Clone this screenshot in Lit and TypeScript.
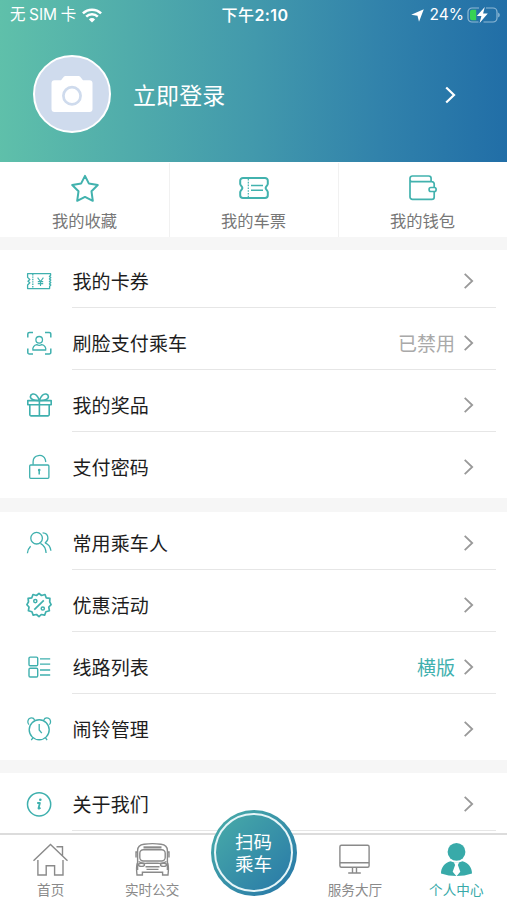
import { LitElement, html, css, svg, nothing } from "lit";
import { customElement, property } from "lit/decorators.js";

const ICONS: Record<string, unknown> = {
  coupon: svg`<path d="M2.6 6.7H25.6V8.3l-1.2 1.1 1.4 1.2-1.4 1.3 1.4 1.2-1.4 1.3 1.4 1.2-1.4 1.3 1.4 1.2-1.2 1.2V21.6H2.6V18l2.2-2.2-1.8-1.6 1.8-1.7L2.6 10.4Z"/><path d="M7.8 7v14.5" stroke-dasharray="1.4 1"/><path d="M12.6 10.7l2.9 3.8 2.9-3.8M15.5 14.5v4.4M12.8 14.6h5.4M12.8 16.6h5.4" stroke-width="1.1"/>`,
  face: svg`<path d="M2.8 8.4V5a1.6 1.6 0 0 1 1.6-1.6H8M20 3.4h4.2A1.6 1.6 0 0 1 25.8 5v3.4M25.8 19.6V23.4a1.6 1.6 0 0 1-1.6 1.6H20M8 25H4.4a1.6 1.6 0 0 1-1.6-1.6V19.6" stroke-width="1.5"/><circle cx="14.2" cy="10.8" r="3.3"/><path d="M7.900 21c-.6-2.600 1.200-4.900 3.900-5.300 1.600.8 3.400.8 5 0 2.700.4 4.500 2.700 3.900 5.300Z"/>`,
  gift: svg`<g stroke-width="1.6"><path d="M2.8 9.600H26.200v4.200H2.800ZM4.800 13.800H24.200V23.600a1.300 1.300 0 0 1-1.300 1.300H6.100a1.300 1.300 0 0 1-1.300-1.300ZM14.400 9.600V25"/><path d="M14.400 9.400C10 9.800 5.200 8.600 5.400 5.600c.2-2.800 3.900-3.600 6-1.300 1.200 1.300 2.300 3 3 5.100ZM14.400 9.400C18.800 9.800 23.600 8.600 23.400 5.600c-.2-2.800-3.900-3.600-6-1.300-1.200 1.300-2.300 3-3 5.100Z"/></g>`,
  lock: svg`<rect x="4.700" y="12" width="19.200" height="13.300" rx="1"/><path d="M8.100 11.800V8.600a6.300 6.300 0 0 1 12.200-2l.5 2.400"/><circle cx="14.200" cy="17" r="1.300" fill="currentColor" stroke="none"/><path d="M14.200 17v4.500" stroke-width="1.500"/>`,
  people: svg`<circle cx="11.600" cy="9.200" r="5.800"/><path d="M2.400 24.300c.2-2.900 1.300-5.100 3.200-7M15.400 14.300c3.400 1.700 5.400 5.300 5.700 9.700M17.600 3.800c3.200.1 5.300 2.300 5.300 5.300 0 2-.9 3.700-2.700 4.700 3.400 1.400 5.300 4.100 5.700 8"/>`,
  offer: svg`<path stroke-width="1.700" d="M14 2.300l2.500 2.200 3.500-1 1.200 3.300 3.700.5-.2 3.600 1.400 2.800-2.300 2.300.6 3.800-3.500.9-1.300 3.500-3.300-.7L14 25.700l-2.500-2.200-3.300.7-1.300-3.500-3.500-.9.600-3.800-2.100-2.300 1.600-2.800-.4-3.600 3.700-.5L8 3.500l3.500 1Z"/><path stroke-width="1.700" d="M9.300 18.700 18.800 9.300"/><circle cx="10.300" cy="10.100" r="1.600" stroke-width="1.500"/><circle cx="17.800" cy="17.500" r="1.600" stroke-width="1.500"/>`,
  list: svg`<rect x="4" y="4.100" width="8.700" height="8.700" rx="1.200" stroke-width="1.400"/><rect x="4" y="15.300" width="8.700" height="8.700" rx="1.200" stroke-width="1.400"/><path d="M15 5.800h10.200M15 11.200h10.200M15 17h10.200M15 22h10.200"/>`,
  alarm: svg`<circle cx="14.200" cy="14.800" r="10" stroke-width="1.400"/><path d="M4 9.600C2.100 7.800 2.500 4 5.200 3.200c2-.6 3.700.2 4.400 1.700M24.400 9.600c1.900-1.800 1.500-5.600-1.200-6.400-2-.6-3.700.2-4.400 1.700M14.200 9v6l2.600 3.200M8 22.600l-1.700 2.600M20.400 22.600l1.700 2.600"/>`,
  info: svg`<circle cx="14.100" cy="14.300" r="11.600" stroke-width="1.500"/><path d="M12.200 13h2.700l-1.400 5.200c0 .8.900.6 2-.5" stroke-width="1.800"/><circle cx="15.300" cy="9.800" r="1.300" fill="currentColor" stroke="none"/>`,
  star: svg`<path stroke-width="2" d="M14 1.900l3.800 7.500 9 1.600-6.300 6.300 1.300 9.500L14 22.900l-7.800 3.900 1.300-9.500L1.200 11l9-1.600Z"/>`,
  ticket: svg`<path stroke-width="2" d="M3 4H25a2.800 2.800 0 0 1 2.800 2.800V10c0 1.200-2.200 2.600-2.200 4s2.200 2.800 2.200 4v3.200A2.800 2.800 0 0 1 25 24H3a2.800 2.800 0 0 1-2.800-2.800V18c0-1.200 2.200-2.600 2.200-4S.2 11.200.2 10V6.800A2.800 2.800 0 0 1 3 4Z"/><path d="M8.300 5v18" stroke-dasharray="1.600 1.200"/><path d="M11 11.500h12M11 16.300h12" stroke-width="1.500"/>`,
  wallet: svg`<g stroke-width="1.700"><path d="M1 8V4.400A2.400 2.400 0 0 1 3.400 2H19.700a2.400 2.400 0 0 1 2.400 2.400V7.400M1 5.800a2 2 0 0 0 2 1.800H22.800a2.400 2.400 0 0 1 2.400 2.400V13M25.200 18v4.900a2.400 2.400 0 0 1-2.400 2.400H3.400A2.400 2.400 0 0 1 1 22.900V5"/><rect x="20.100" y="13.500" width="7" height="4" rx="1.700"/></g>`,
};

@customElement("menu-row")
export class MenuRow extends LitElement {
  @property() icon = "";
  @property() label = "";
  @property() value = "";
  @property({ type: Boolean }) accent = false;
  @property({ type: Boolean }) last = false;
  static styles = css`
    :host { display: block; height: 62px; }
    .line { display: flex; align-items: center; height: 52px; padding: 5px 33px 0 24.5px; }
    .icon { width: 28px; height: 28px; color: #3fb0ae; flex: none; fill: none; stroke: currentColor; stroke-width: 1.3; stroke-linejoin: round; stroke-linecap: butt; }
    .label { margin-left: 20px; flex: 1; font-size: 19px; line-height: 28px; letter-spacing: .1px; color: #1d1d1d; }
    .value { font-size: 19px; line-height: 28px; color: #a9a9a9; margin-right: 9px; }
    .accent { color: #3fb0ae; }
    .chev { width: 10px; height: 16px; fill: none; stroke: #999; stroke-width: 1.8; }
    .rule { height: 1px; margin: 0 11px 0 72px; background: #e6e6e6; }
  `;
  render() {
    return html`<div class="line">
        <svg class="icon" viewBox="0 0 28 28">${ICONS[this.icon]}</svg>
        <span class="label">${this.label}</span>
        ${this.value ? html`<span class="value ${this.accent ? "accent" : ""}">${this.value}</span>` : nothing}
        <svg class="chev" viewBox="0 0 10 16"><path d="M.7.8 8.200 8 .7 15.200"/></svg>
      </div>
      ${this.last ? nothing : html`<div class="rule"></div>`}`;
  }
}

interface Item { icon: string; label: string; value?: string; accent?: boolean }

const GROUPS: Item[][] = [
  [
    { icon: "coupon", label: "我的卡券" },
    { icon: "face", label: "刷脸支付乘车", value: "已禁用" },
    { icon: "gift", label: "我的奖品" },
    { icon: "lock", label: "支付密码" },
  ],
  [
    { icon: "people", label: "常用乘车人" },
    { icon: "offer", label: "优惠活动" },
    { icon: "list", label: "线路列表", value: "横版", accent: true },
    { icon: "alarm", label: "闹铃管理" },
  ],
  [{ icon: "info", label: "关于我们" }],
];

const NAV = {
  home: svg`<path d="M1.500 18.800 18.500 2.500 35.500 18.800M24.500 4.800H30.500V13.400M5.900 18v15H14.200V23.800h8.400V33H31V18"/>`,
  bus: svg`<path d="M3.600 28V8.500C3.600 4 6 2.700 10 2.200c5.500-.8 11.500-.8 17 0 4 .5 6.400 1.800 6.400 6.300V28M3.300 21c-1.200 4-.8 8-.3 12h5.400V30.200h20.200V33h5.400c.5-4 .9-8-.3-12M3.500 10H2v5.500M33.500 10H35v5.500" /><rect x="5.800" y="7.800" width="25.400" height="11.200" rx="3.500"/><path d="M9.500 5.400h18" stroke-width="2.200"/><path d="M4.500 19.500c3 2.300 6 2 9 1.800h10c3 .2 6 .5 9-1.800M11.500 24.800h14M12.500 27.400h12" /><ellipse cx="7.500" cy="22.800" rx="3" ry="1.600"/><ellipse cx="29.500" cy="22.800" rx="3" ry="1.600"/>`,
  desk: svg`<rect x="3.900" y="3.200" width="29.200" height="22" rx="1.500"/><path d="M3.900 20.800h29.200M16.500 25.500v5M20.500 25.500v5M12.200 31h12.600"/>`,
  me: svg`<circle cx="18.500" cy="9.900" r="8.900" fill="currentColor" stroke="none"/><path d="M12.500 19.200Q18.500 22 24.500 19.200C30.500 21 34 25.500 34 31.500Q26.500 34 18.500 34T3 31.500C3 25.500 6.500 21 12.500 19.200Z" fill="currentColor" stroke="none"/><path d="M15.800 20.300h5.400L19.900 23l2.400 6.800-3.800 4.400-3.800-4.400L17.100 23Z" fill="#fff" stroke="none"/>`,
};

@customElement("app-root")
export class AppRoot extends LitElement {
  static styles = css`
    :host { display: flex; flex-direction: column; position: relative; width: 507px; height: 900px; overflow: hidden; background: #f6f6f6; font-family: "Noto Sans CJK SC", sans-serif; }
    .header { flex: none; height: 162px; background: linear-gradient(91deg, #5fc0aa 0%, #4299ac 50%, #3182ab 75%, #216ea7 100%); color: #fff; }
    .status { display: grid; grid-template-columns: 1fr auto 1fr; align-items: center; height: 30px; padding: 0 7px 0 10px; font-family: Inter, "Noto Sans CJK SC", sans-serif; font-size: 15.5px; line-height: 24px; }
    .left, .right { display: flex; align-items: center; }
    .right { justify-content: flex-end; }
    .time { font-weight: 600; font-size: 16px; letter-spacing: .4px; }
    .time span { font-weight: 500; }
    .carrier { display: flex; gap: 3.500px; }
    .wifi { width: 20px; height: 15px; margin-left: 6px; }
    .loc { width: 13px; height: 13px; margin-right: 6px; }
    .pct { margin-right: 3px; font-size: 15.500px; }
    .batt { width: 33px; height: 18px; }
    .profile { display: flex; align-items: center; height: 128px; padding: 0 51px 0 33px; }
    .avatar { box-sizing: border-box; width: 78px; height: 78px; border: 2.500px solid #fff; border-radius: 50%; background: #cfdbed; display: grid; place-items: center; }
    .avatar svg { width: 42px; height: 38px; }
    .login { flex: 1; margin-left: 22px; font-size: 23px; line-height: 34px; letter-spacing: .1px; }
    .go { width: 11px; height: 18px; margin-top: 2px; fill: none; stroke: #fff; stroke-width: 2.200; }
    .quick { flex: none; display: grid; grid-template-columns: repeat(3, 1fr); height: 74px; background: #fff; padding-top: 1px; }
    .tile { display: flex; flex-direction: column; align-items: center; padding-top: 11px; box-sizing: border-box; box-shadow: 1px 0 #f1f1f1; color: #777; font-size: 16.300px; line-height: 24px; }
    .tile:last-child { box-shadow: none; }
    .tile svg { width: 28px; height: 28px; margin-bottom: 6px; overflow: visible; fill: none; stroke: #42b2ae; stroke-width: 1.200; stroke-linejoin: round; }
    .group { flex: none; background: #fff; margin-top: 13px; }
    .group:nth-of-type(4) { margin-top: 14px; }
    .nav { position: absolute; left: 0; right: 0; bottom: 0; height: 65px; border-top: 2px solid #dcdcdc; background: #fff; display: grid; grid-template-columns: repeat(5, 1fr); }
    .tab { display: flex; flex-direction: column; align-items: center; color: #8a8a8a; font-size: 13.600px; line-height: 20px; padding-top: 7px; }
    .tab svg { width: 37px; height: 35px; margin-bottom: 2px; fill: none; stroke: currentColor; stroke-width: 1.400; }
    .on { color: #38aaa9; }
    .scan { position: absolute; left: 210.500px; top: 809.500px; width: 86px; height: 86px; border-radius: 50%; padding: 3.500px; box-sizing: border-box; background: linear-gradient(135deg, #4aaea8, #2675a8); }
    .ring { box-sizing: border-box; width: 100%; height: 100%; border: 2px solid #e6f5f8; border-radius: 50%; display: grid; place-content: center; color: #fff; font-size: 18.500px; line-height: 22px; text-align: center; }
    .ring span { width: 38px; margin-top: -1px; }
  `;
  tile(icon: string, label: string) {
    return html`<div class="tile"><svg viewBox="0 0 28 28">${ICONS[icon]}</svg><span>${label}</span></div>`;
  }
  tab(icon: keyof typeof NAV, label: string, on = false) {
    return html`<div class="tab ${on ? "on" : ""}"><svg viewBox="0 0 37 35">${NAV[icon]}</svg><span>${label}</span></div>`;
  }
  render() {
    return html`
      <div class="header">
        <div class="status">
          <div class="left"><span class="carrier"><span>无</span><span>SIM</span><span>卡</span></span>
            <svg class="wifi" viewBox="0 0 20 15" fill="none" stroke="#fff" stroke-width="2.500"><path d="M.9 5.400a13 13 0 0 1 18.200 0M4.200 8.700a8.300 8.300 0 0 1 11.600 0"/><path d="M10 14.500 6.900 11.400a4.400 4.400 0 0 1 6.200 0Z" fill="#fff" stroke="none"/></svg>
          </div>
          <span class="time"><span>下午</span>2:10</span>
          <div class="right">
            <svg class="loc" viewBox="0 0 13 13"><path d="M12.800.3 8 12.800 6.500 6.800.2 5.800Z" fill="#fff"/></svg>
            <span class="pct">24%</span>
            <svg class="batt" viewBox="0 0 33 18"><path d="M12 2H5a4 4 0 0 0-4 4v6a4 4 0 0 0 4 4h6.500M19 2h7a4 4 0 0 1 4 4v6a4 4 0 0 1-4 4H16.500" fill="none" stroke="#8fb9d6" stroke-width="1.200"/><path d="M31.200 6.500a2.800 2.800 0 0 1 0 5Z" fill="#8fb9d6"/><path d="M5 3.800h4.200v10.400H5a2 2 0 0 1-2-2V5.800a2 2 0 0 1 2-2Z" fill="#37d354"/><path d="M17.800 1 9.800 10h4.600l-1.800 7 8.200-9.400h-4.700Z" fill="#fff"/></svg>
          </div>
        </div>
        <div class="profile">
          <div class="avatar"><svg viewBox="0 0 42 38"><path d="M3.500 5.200H10l3-3.700a2 2 0 0 1 1.500-.6h13a2 2 0 0 1 1.500.6l3 3.700h6.500a3 3 0 0 1 3 3V34a3 3 0 0 1-3 3h-35a3 3 0 0 1-3-3V8.200a3 3 0 0 1 3-3Z" fill="#fff"/><circle cx="21" cy="20.800" r="8.600" fill="none" stroke="#cfdbed" stroke-width="2.700"/></svg></div>
          <span class="login">立即登录</span>
          <svg class="go" viewBox="0 0 11 18"><path d="M1.200 1.500 9 9l-7.800 7.500"/></svg>
        </div>
      </div>
      <div class="quick">
        ${this.tile("star", "我的收藏")}${this.tile("ticket", "我的车票")}${this.tile("wallet", "我的钱包")}
      </div>
      ${GROUPS.map(
        (g) => html`<div class="group">${g.map(
          (i, n) => html`<menu-row .icon=${i.icon} .label=${i.label} .value=${i.value ?? ""} .accent=${!!i.accent} .last=${g.length > 1 && n === g.length - 1}></menu-row>`
        )}</div>`
      )}
      <div class="nav">
        ${this.tab("home", "首页")}${this.tab("bus", "实时公交")}
        <div></div>
        ${this.tab("desk", "服务大厅")}${this.tab("me", "个人中心", true)}
      </div>
      <div class="scan"><div class="ring"><span>扫码乘车</span></div></div>
    `;
  }
}
